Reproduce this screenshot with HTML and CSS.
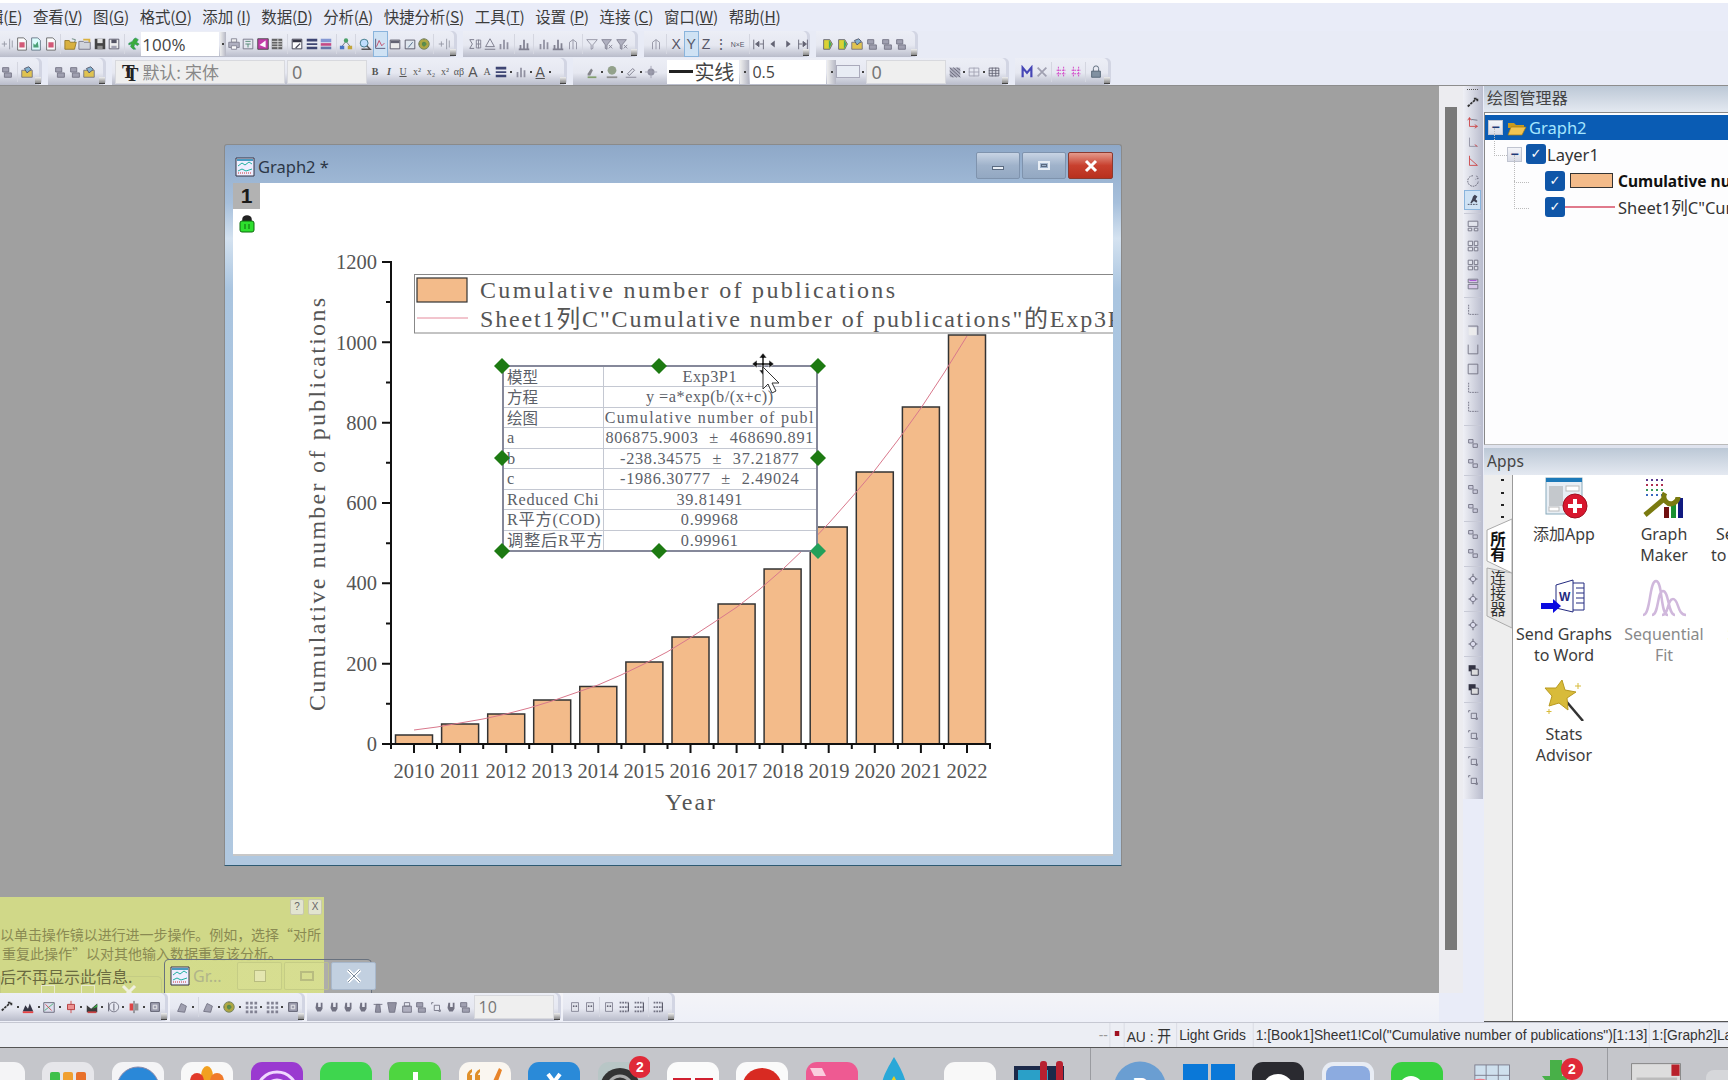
FILE: index.html
```html
<!DOCTYPE html>
<html lang="zh">
<head>
<meta charset="utf-8">
<title>Origin Graph2</title>
<link rel="stylesheet" href="styles.css">
</head>
<body>
<svg class="defs" width="0" height="0" aria-hidden="true">
<symbol id="doc" viewBox="0 0 16 16"><path d="M3 1h7l3 3v11H3z" fill="#fff" stroke="#555"/><path d="M5 6h6v6H5z" fill="#d04a6a"/></symbol>
<symbol id="docg" viewBox="0 0 16 16"><path d="M3 1h7l3 3v11H3z" fill="#dff" stroke="#567"/><path d="M5 7l2 2 3-4 1 7H5z" fill="#3a9a6a"/></symbol>
<symbol id="fold" viewBox="0 0 16 16"><path d="M1 4h5l1 2h7l-2 8H1z" fill="#d8ab2c" stroke="#8a6a10"/><path d="M9 2l4 1-1 3" fill="none" stroke="#576"/></symbol>
<symbol id="fold2" viewBox="0 0 16 16"><path d="M1 5h5l1 1h7v8H1z" fill="#cfd2da" stroke="#667"/><path d="M6 3h7v3" fill="none" stroke="#d8ab2c" stroke-width="2"/></symbol>
<symbol id="sav" viewBox="0 0 16 16"><path d="M2 2h12v12H2z" fill="#333"/><path d="M5 2h6v5H5z" fill="#ddd"/><path d="M5 10h6v4H5z" fill="#888"/></symbol>
<symbol id="sav2" viewBox="0 0 16 16"><path d="M2.500 2.500h11v11h-11z" fill="#eee" stroke="#445"/><path d="M5 3h6v4H5z" fill="#445"/><path d="M5 10h6v3H5z" fill="#99a"/></symbol>
<symbol id="run" viewBox="0 0 16 16"><path d="M10 1l3 2-2 3 3 2-2 2-3-2-1 3 2 3H7L4 11l1-3-3 1V7l4-2 2-3z" fill="#2aa52a" stroke="#176" stroke-width=".5"/></symbol>
<symbol id="prn" viewBox="0 0 16 16"><path d="M5 2h6v4H5z" fill="#eee" stroke="#778"/><path d="M2 6h12v6H2z" fill="#aab" stroke="#778"/><path d="M5 10h6v4H5z" fill="#fff" stroke="#778"/></symbol>
<symbol id="tbl" viewBox="0 0 16 16"><path d="M2.500 2.500h11v11h-11z" fill="#e6e8f0" stroke="#667"/><path d="M5 5h6M5 8h6M8 8v4" stroke="#3a7a60" fill="none"/></symbol>
<symbol id="mag" viewBox="0 0 16 16"><path d="M2 2h12v12H2z" fill="#c02aa0" stroke="#333"/><path d="M4 9l7-5v8z" fill="#fff"/></symbol>
<symbol id="col" viewBox="0 0 16 16"><path d="M2 2h12v12H2z" fill="#555"/><path d="M2 5h12M2 8h12M2 11h12M9 2v12" stroke="#ddd"/></symbol>
<symbol id="note" viewBox="0 0 16 16"><path d="M2.500 2.500h11v11h-11z" fill="#fff" stroke="#223"/><path d="M3 3h10v3H3z" fill="#223"/><path d="M6 12l5-5 1 1-5 5z" fill="#334"/></symbol>
<symbol id="lin" viewBox="0 0 16 16"><path d="M2 2h12v3H2zM2 7h12v2H2zM2 11h12v3H2z" fill="#2c3466"/></symbol>
<symbol id="stk" viewBox="0 0 16 16"><path d="M2 2h12v4H2z" fill="#7a8fd0"/><path d="M2 7h12v3H2z" fill="#c03a7a"/><path d="M2 11h12v3H2z" fill="#5a6aa0"/></symbol>
<symbol id="tre" viewBox="0 0 16 16"><path d="M8 5L3 11M8 5l5 6" stroke="#667" fill="none"/><circle cx="8" cy="4" r="2.500" fill="#3a9a5a"/><rect x="1" y="10" width="5" height="4" fill="#3a6ac0"/><rect x="10" y="10" width="5" height="4" fill="#c0a02a"/></symbol>
<symbol id="zm" viewBox="0 0 16 16"><circle cx="7" cy="7" r="4.500" fill="#bdf" stroke="#267"/><path d="M10 10l4 4H4" stroke="#444" stroke-width="1.500" fill="none"/></symbol>
<symbol id="hl" viewBox="0 0 16 16"><path d="M3 2v11h11" stroke="#446" fill="none"/><path d="M4 11l3-7 3 6 3-3" stroke="#c03050" fill="none"/></symbol>
<symbol id="win" viewBox="0 0 16 16"><path d="M2.500 3.500h11v10h-11z" fill="#eee" stroke="#445"/><path d="M3 4h10v3H3z" fill="#556"/></symbol>
<symbol id="wn2" viewBox="0 0 16 16"><path d="M2.500 3.500h11v10h-11z" fill="#dfe6ee" stroke="#445"/><path d="M6 12l5-6" stroke="#357"/></symbol>
<symbol id="gear" viewBox="0 0 16 16"><circle cx="8" cy="8" r="6" fill="#a8a030" stroke="#675"/><circle cx="8" cy="8" r="2.500" fill="#4a8a3a"/><path d="M8 2v12M2 8h12" stroke="#554" stroke-dasharray="1 3"/></symbol>
<symbol id="gp" viewBox="0 0 16 16"><path d="M2 8h6M5 5v6M11 2v12M14 4v8" stroke="#8a8e9a" fill="none"/></symbol>
<symbol id="sig" viewBox="0 0 16 16"><path d="M7 3H2l3 5-3 5h5" stroke="#667" fill="none"/><path d="M9.500 3.500h5v9h-5zM9.500 8h5M12 3v10" stroke="#778" fill="none"/></symbol>
<symbol id="iso" viewBox="0 0 16 16"><path d="M8 2L3 11h10zM2 14h12" stroke="#667" fill="none"/></symbol>
<symbol id="bar" viewBox="0 0 16 16"><path d="M3 8h2v6H3zM7 3h2v11H7zM11 6h2v8h-2z" fill="#889"/></symbol>
<symbol id="hb" viewBox="0 0 16 16"><path d="M2 14h12M4 9v4M8 3v10M12 7v6" stroke="#778" stroke-width="2" fill="none"/></symbol>
<symbol id="hk" viewBox="0 0 16 16"><path d="M4 14V6l4-3 4 3v8M8 3v11" stroke="#889" fill="none"/></symbol>
<symbol id="fun" viewBox="0 0 16 16"><path d="M2 3h12L9 9v4l-2 1V9z" fill="none" stroke="#889"/></symbol>
<symbol id="fx" viewBox="0 0 16 16"><path d="M2 3h11L8 9v5l-2-1V9z" fill="#aab" stroke="#778"/><path d="M10 9l4 4M14 9l-4 4" stroke="#778"/></symbol>
<symbol id="cyl" viewBox="0 0 16 16"><path d="M3 3h7l3 5-3 6H3z" fill="#d9d020" stroke="#556"/><path d="M9 3l3 5-3 6" fill="#2ca05a"/></symbol>
<symbol id="fil" viewBox="0 0 16 16"><path d="M2 6h12v8H2z" fill="#e0c040" stroke="#667"/><path d="M5 4l5-2 3 3-5 4z" fill="#7ac" stroke="#445"/></symbol>
<symbol id="gd" viewBox="0 0 16 16"><path d="M3 3h7v5H3zM5 9h8v5H5z" fill="#99a" stroke="#667"/></symbol>
<symbol id="ln1" viewBox="0 0 16 16"><path d="M3 2v11h11" stroke="#667" fill="none" stroke-dasharray="2 1"/></symbol>
<symbol id="ln2" viewBox="0 0 16 16"><path d="M2.500 3.500h11M13.500 3.500v10" stroke="#667" fill="none"/><path d="M3 5h9v9H3z" fill="#eee"/></symbol>
<symbol id="ln3" viewBox="0 0 16 16"><path d="M2.500 3v10.500h11V3" stroke="#667" fill="none"/></symbol>
<symbol id="ln4" viewBox="0 0 16 16"><path d="M2.500 2.500h11v11h-11z" stroke="#667" fill="none"/></symbol>
<symbol id="v1" viewBox="0 0 16 16"><path d="M2.500 2.500h11v6h-11zM2.500 10.500h4v3h-4zM9.500 10.500h4v3h-4z" fill="#e4e6ee" stroke="#667"/></symbol>
<symbol id="v2" viewBox="0 0 16 16"><path d="M2.500 2.500h5v5h-5zM9.500 2.500h4v5h-4zM2.500 9.500h5v4h-5zM9.500 9.500h4v4h-4z" fill="#e4e6ee" stroke="#667"/></symbol>
<symbol id="v3" viewBox="0 0 16 16"><path d="M2.500 2.500h11v4h-11zM2.500 8.500h11v5h-11z" fill="#d8c8e8" stroke="#667"/><path d="M4 4h8" stroke="#a03ad0"/></symbol>
<symbol id="a1" viewBox="0 0 16 16"><path d="M2 12L12 3M9 3h4v4" stroke="#222" stroke-width="2" fill="none" stroke-dasharray="3 1"/></symbol>
<symbol id="a2" viewBox="0 0 16 16"><path d="M4 3v10h9M4 3L2 6M4 3l2 3M13 13l-3-2M13 13l-3 2" stroke="#c33" fill="none"/><path d="M6 5l7 1" stroke="#667"/></symbol>
<symbol id="a3" viewBox="0 0 16 16"><path d="M4 3v10h9" stroke="#889" fill="none"/><path d="M13 13l-3-2" stroke="#c33"/></symbol>
<symbol id="a4" viewBox="0 0 16 16"><path d="M4 2v11h9L4 5" stroke="#c33" fill="none"/></symbol>
<symbol id="a5" viewBox="0 0 16 16"><path d="M8 2a6 6 0 1 0 6 6M12 2l2 3-3 1" stroke="#556" fill="none" stroke-dasharray="2 1"/></symbol>
<symbol id="a6" viewBox="0 0 16 16"><path d="M2 13h12" stroke="#334" stroke-dasharray="2 1"/><path d="M10 2l3 2-2 3 2 2-1 2-3-2-3 3-1-1 2-4 1-3z" fill="#334"/></symbol>
<symbol id="c1" viewBox="0 0 16 16"><path d="M8 2v12M3 8h10" stroke="#778" stroke-width="1.500"/><circle cx="8" cy="8" r="3" fill="#dde" stroke="#667"/></symbol>
<symbol id="c2" viewBox="0 0 16 16"><path d="M3 4h5v4H3zM8 9h5v4H8z" fill="#ccd" stroke="#667"/></symbol>
<symbol id="c3" viewBox="0 0 16 16"><path d="M3 2.500h8v7H3z" fill="#223"/><path d="M6 7h8v7H6z" fill="#ddd" stroke="#223"/></symbol>
<symbol id="c4" viewBox="0 0 16 16"><path d="M6 6h6v6H6z" fill="none" stroke="#667"/><path d="M3 3h2M3 3v2M13 13h-2M13 13v-2" stroke="#667"/></symbol>
<symbol id="b1" viewBox="0 0 16 16"><path d="M2 13l3-7 3 4 2-6 4 9z" fill="#223"/><path d="M2 14h12" stroke="#e33" stroke-width="2"/></symbol>
<symbol id="b2" viewBox="0 0 16 16"><path d="M2 3h12v11H2z" fill="#dde" stroke="#556"/><path d="M3 12L13 4" stroke="#3a6"/><path d="M4 5l7 7" stroke="#c33"/></symbol>
<symbol id="b3" viewBox="0 0 16 16"><path d="M8 1v14" stroke="#c33"/><path d="M4 5h8v6H4z" fill="#e88" stroke="#a22"/></symbol>
<symbol id="b4" viewBox="0 0 16 16"><path d="M2 6l5 4 7-6v10H2z" fill="#2a2a2a"/><path d="M8 10l6-5v3z" fill="#2a3"/><path d="M3 14h10" stroke="#c33" stroke-width="2"/></symbol>
<symbol id="b5" viewBox="0 0 16 16"><circle cx="9" cy="8" r="5.500" fill="none" stroke="#667"/><path d="M3 3v10M9 4v8" stroke="#445"/></symbol>
<symbol id="b6" viewBox="0 0 16 16"><path d="M8 1v14" stroke="#333"/><path d="M3 4h4v8H3z" fill="#d33"/><path d="M9 4h4v8H9z" fill="#888"/></symbol>
<symbol id="b7" viewBox="0 0 16 16"><path d="M3 3h10v10H3z" fill="#99a" stroke="#445"/><path d="M6 6h4v4H6z" fill="none" stroke="#eee"/></symbol>
<symbol id="b8" viewBox="0 0 16 16"><path d="M3 13l4-9 6 3-2 7z" fill="#99a" stroke="#667"/></symbol>
<symbol id="b9" viewBox="0 0 16 16"><path d="M2 2h3v3H2zM7 2h3v3H7zM12 2h3v3h-3zM2 7h3v3H2zM7 7h3v3H7zM12 7h3v3h-3zM2 12h3v3H2zM7 12h3v3H7zM12 12h3v3h-3z" fill="#778"/></symbol>
<symbol id="t1" viewBox="0 0 16 16"><path d="M5 3h2v5h3V3h2v7l-2 3H6L4 9z" fill="#667"/></symbol>
<symbol id="t2" viewBox="0 0 16 16"><path d="M5 14l1-9h4l1 9zM3 5h10" fill="#889" stroke="#667"/></symbol>
<symbol id="t3" viewBox="0 0 16 16"><path d="M3 3h10l-2 11H5z" fill="#889" stroke="#667"/></symbol>
<symbol id="t4" viewBox="0 0 16 16"><path d="M3 7h10v7H3z" fill="#aab" stroke="#667"/><path d="M5 3h6v4H5z" fill="none" stroke="#667"/></symbol>
<symbol id="m1" viewBox="0 0 16 16"><path d="M4 3h8v10H4z" fill="#e2e4ec" stroke="#778"/><circle cx="6.500" cy="7" r="1" fill="#556"/><circle cx="9.500" cy="7" r="1" fill="#556"/></symbol>
<symbol id="m2" viewBox="0 0 16 16"><path d="M3 3h10M3 8h10M3 13h10" stroke="#667" stroke-dasharray="2 1" stroke-width="2"/><path d="M13 3v10" stroke="#223"/></symbol>
<symbol id="n1" viewBox="0 0 16 16"><path d="M2 3v11M13 3v11" stroke="#556"/><path d="M8 5l-4 3 4 3zM13 8h-4" fill="#556" stroke="#556"/></symbol>
<symbol id="n2" viewBox="0 0 16 16"><path d="M10 4l-5 4 5 4z" fill="#556"/></symbol>
<symbol id="n3" viewBox="0 0 16 16"><path d="M6 4l5 4-5 4z" fill="#556"/></symbol>
<symbol id="n4" viewBox="0 0 16 16"><path d="M3 3v11M13 3v11" stroke="#556"/><path d="M8 5l4 3-4 3zM3 8h4" fill="#556" stroke="#556"/></symbol>
<symbol id="k1" viewBox="0 0 16 16"><path d="M3 10l4-6 2 2-3 6H3z" fill="#7a7a80"/><path d="M3 14h10" stroke="#7a9a60" stroke-width="2"/></symbol>
<symbol id="k2" viewBox="0 0 16 16"><circle cx="8" cy="6" r="5" fill="#8a9a80"/><path d="M2 14h12" stroke="#888" stroke-width="2"/></symbol>
<symbol id="k3" viewBox="0 0 16 16"><path d="M4 10l6-6 2 2-6 6z" fill="none" stroke="#667"/><path d="M2 14h12" stroke="#778"/></symbol>
<symbol id="k4" viewBox="0 0 16 16"><circle cx="8" cy="8" r="4" fill="#889"/><path d="M8 1v14M1 8h14" stroke="#99a"/></symbol>
<symbol id="k5" viewBox="0 0 16 16"><path d="M2 3h12v11H2z" fill="#aab"/><path d="M2 3l12 11M6 3l8 7M2 7l8 7M10 3l4 3M2 11l4 3" stroke="#556"/></symbol>
<symbol id="k6" viewBox="0 0 16 16"><path d="M2.500 3.500h11v9h-11zM8 3v10M2 8h12" fill="none" stroke="#99a"/></symbol>
<symbol id="k7" viewBox="0 0 16 16"><path d="M2.500 3.500h11v9h-11zM2 6.500h12M2 9.500h12M6 3v10M10 3v10" fill="none" stroke="#556"/></symbol>
<symbol id="z1" viewBox="0 0 16 16"><path d="M3 14V3l5 6 5-6v11" fill="none" stroke="#3535b0" stroke-width="2.500"/></symbol>
<symbol id="z2" viewBox="0 0 16 16"><path d="M3 3l10 10M13 3L3 13" stroke="#99a" stroke-width="2"/></symbol>
<symbol id="z3" viewBox="0 0 16 16"><path d="M5 2v12M11 2v12M3 6h10M3 10h10" stroke="#d020c0" stroke-dasharray="2 1"/></symbol>
<symbol id="z4" viewBox="0 0 16 16"><path d="M3 7h10v7H3z" fill="#789" stroke="#456"/><path d="M5 7V4a3 3 0 0 1 6 0v3" fill="none" stroke="#456"/></symbol>
<symbol id="mini" viewBox="0 0 20 20"><path d="M1 1h18v18H1z" fill="#eef" stroke="#334"/><path d="M2 2h16v2H2z" fill="#4a9ac0"/><path d="M3 9l4-3 3 2 4-3 3 2M3 14l4-2 4 2 6-2" fill="none" stroke="#20b0a0"/><path d="M3 16h14" stroke="#c33" stroke-dasharray="1 1"/></symbol>
</svg>

<div class="topstrip"></div>
<nav class="menubar">
  <span class="mi first">辑(<u>E</u>)</span><span class="mi">查看(<u>V</u>)</span><span class="mi">图(<u>G</u>)</span><span class="mi">格式(<u>O</u>)</span><span class="mi">添加 (<u>I</u>)</span><span class="mi">数据(<u>D</u>)</span><span class="mi">分析(<u>A</u>)</span><span class="mi">快捷分析(<u>S</u>)</span><span class="mi">工具(<u>T</u>)</span><span class="mi">设置 (<u>P</u>)</span><span class="mi">连接 (<u>C</u>)</span><span class="mi">窗口(<u>W</u>)</span><span class="mi">帮助(<u>H</u>)</span>
</nav>

<div class="tbrow row1">
  <div class="seg w455">
    <svg class="ic"><use href="#gp"/></svg><svg class="ic"><use href="#doc"/></svg><svg class="ic"><use href="#docg"/></svg><svg class="ic"><use href="#doc"/></svg><i class="s"></i>
    <svg class="ic"><use href="#fold"/></svg><svg class="ic"><use href="#fold2"/></svg><svg class="ic"><use href="#sav"/></svg><svg class="ic"><use href="#sav2"/></svg><i class="s"></i>
    <svg class="ic"><use href="#run"/></svg>
    <div class="combo c78 big">100%</div><span class="drop thin"></span>
    <svg class="ic"><use href="#prn"/></svg><svg class="ic"><use href="#tbl"/></svg><svg class="ic"><use href="#mag"/></svg><svg class="ic"><use href="#col"/></svg><i class="s"></i>
    <svg class="ic"><use href="#note"/></svg><svg class="ic"><use href="#lin"/></svg><svg class="ic"><use href="#stk"/></svg><i class="s"></i>
    <svg class="ic"><use href="#tre"/></svg><i class="s"></i>
    <svg class="ic"><use href="#zm"/></svg><span class="hi"><svg class="ic"><use href="#hl"/></svg></span><svg class="ic"><use href="#win"/></svg><svg class="ic"><use href="#wn2"/></svg><svg class="ic"><use href="#gear"/></svg><i class="s"></i><svg class="ic"><use href="#gp"/></svg>
    <b class="grip"></b>
  </div>
  <div class="seg w174 pl">
    <svg class="ic"><use href="#sig"/></svg><svg class="ic"><use href="#iso"/></svg><svg class="ic"><use href="#bar"/></svg><i class="s"></i><svg class="ic"><use href="#hb"/></svg><i class="s"></i><svg class="ic"><use href="#bar"/></svg><svg class="ic"><use href="#hb"/></svg><svg class="ic"><use href="#hk"/></svg><i class="s"></i><svg class="ic"><use href="#fun"/></svg><svg class="ic"><use href="#fx"/></svg><svg class="ic"><use href="#fx"/></svg>
    <b class="grip"></b>
  </div>
  <div class="seg w166 pl">
    <svg class="ic"><use href="#hk"/></svg><i class="s"></i><span class="lt">X</span><span class="hi lt">Y</span><span class="lt">Z</span><span class="lt">⋮</span><span class="lt tiny">N×E</span><i class="s"></i>
    <svg class="ic"><use href="#n1"/></svg><svg class="ic"><use href="#n2"/></svg><svg class="ic"><use href="#n3"/></svg><svg class="ic"><use href="#n4"/></svg>
    <b class="grip"></b>
  </div>
  <div class="seg w102 pl">
    <svg class="ic"><use href="#cyl"/></svg><svg class="ic"><use href="#cyl"/></svg><svg class="ic"><use href="#fil"/></svg><svg class="ic"><use href="#gd"/></svg><svg class="ic"><use href="#gd"/></svg><svg class="ic"><use href="#gd"/></svg>
    <b class="grip"></b>
  </div>
</div>

<div class="tbrow row2">
  <div class="seg w42">
    <svg class="ic"><use href="#gd"/></svg><i class="s"></i><svg class="ic"><use href="#fil"/></svg>
    <b class="grip"></b>
  </div>
  <div class="seg w55 pl">
    <svg class="ic"><use href="#gd"/></svg><svg class="ic"><use href="#gd"/></svg><svg class="ic"><use href="#fil"/></svg>
    <b class="grip"></b>
  </div>
  <div class="seg w466 fmt">
    <div class="combo c170 dim"><span class="tt">T<em>T</em></span>默认: 宋体</div>
    <div class="combo c80 dim">0</div>
    <span class="fx b">B</span><span class="fx it">I</span><span class="fx un">U</span><span class="fx">x²</span><span class="fx">x₂</span><span class="fx">x²</span><span class="fx">αβ</span><span class="fx lg">A</span><span class="fx">A</span><svg class="ic"><use href="#lin"/></svg><span class="dot"></span><svg class="ic"><use href="#bar"/></svg><span class="dot"></span><span class="fx lg un">A</span><span class="dot"></span>
    <b class="grip"></b>
  </div>
  <div class="seg w436 pl2">
    <svg class="ic"><use href="#k1"/></svg><span class="dot"></span><svg class="ic"><use href="#k2"/></svg><span class="dot"></span><svg class="ic"><use href="#k3"/></svg><span class="dot"></span><svg class="ic"><use href="#k4"/></svg>
    <div class="combo c72 solid"><i class="thick"></i>实线</div><span class="drop"></span>
    <div class="combo c76 num">0.5</div><span class="drop"></span>
    <span class="linebox"></span><span class="dot"></span>
    <div class="combo c80 dim">0</div>
    <svg class="ic"><use href="#k5"/></svg><span class="dot"></span><svg class="ic"><use href="#k6"/></svg><span class="dot"></span><svg class="ic"><use href="#k7"/></svg>
    <b class="grip"></b>
  </div>
  <div class="seg w96 pl">
    <svg class="ic"><use href="#z1"/></svg><svg class="ic"><use href="#z2"/></svg><i class="s"></i><svg class="ic"><use href="#z3"/></svg><svg class="ic"><use href="#z3"/></svg><i class="s"></i><svg class="ic"><use href="#z4"/></svg>
    <b class="grip"></b>
  </div>
</div>

<div class="main">
  <div class="leftcol">
    <section class="workspace">
      <article class="gwin">
        <header class="gtitle">
          <svg class="gicon"><use href="#mini"/></svg>
          <span class="gname">Graph2 *</span>
          <span class="wbtn"><i class="wmin"></i></span>
          <span class="wbtn"><i class="wres"></i></span>
          <span class="wbtn wclose"><svg width="16" height="14" viewBox="0 0 16 14"><path d="M3 2l10 10M13 2L3 12" stroke="#fff" stroke-width="3"/></svg></span>
        </header>
        <div class="client">
          <svg class="chart" viewBox="233 183 880 672" width="880" height="672">
            <g class="bars">
              <rect x="395.500" y="735" width="37" height="9"/>
              <rect x="441.600" y="724" width="37" height="20"/>
              <rect x="487.700" y="714" width="37" height="30"/>
              <rect x="533.700" y="700" width="37" height="44"/>
              <rect x="579.800" y="686.500" width="37" height="57.500"/>
              <rect x="625.900" y="662" width="37" height="82"/>
              <rect x="672" y="637" width="37" height="107"/>
              <rect x="718.100" y="604" width="37" height="140"/>
              <rect x="764.100" y="569" width="37" height="175"/>
              <rect x="810.200" y="527" width="37" height="217"/>
              <rect x="856.300" y="472" width="37" height="272"/>
              <rect x="902.400" y="407" width="37" height="337"/>
              <rect x="948.500" y="335" width="37" height="409"/>
            </g>
            <polyline class="fit" points="414,730 437,727 460,723 483,719 506,714 529,708 552,701 575,693 598,685 621,675 644,664 667,652 690,638 713,623 737,607 760,589 783,569 806,547 829,523 852,497 875,470 898,440 921,408 944,373 967,336"/>
            <path class="axis" d="M391 261V745M382 262H391M386 302H391M382 342.300H391M386 382.500H391M382 422.700H391M386 462.800H391M382 503H391M386 543.200H391M382 583.300H391M386 623.500H391M382 663.700H391M386 703.800H391M382 744H991"/>
            <path class="axis" d="M414 744v9M460.100 744v9M506.200 744v9M552.200 744v9M598.300 744v9M644.400 744v9M690.500 744v9M736.600 744v9M782.600 744v9M828.700 744v9M874.800 744v9M920.900 744v9M967 744v9M391 744v5M437 744v5M483.200 744v5M529.200 744v5M575.300 744v5M621.400 744v5M667.500 744v5M713.600 744v5M759.600 744v5M805.700 744v5M851.800 744v5M897.900 744v5M944 744v5M990 744v5"/>
            <g class="ylab">
              <text x="377" y="269">1200</text><text x="377" y="350">1000</text><text x="377" y="430">800</text><text x="377" y="510">600</text><text x="377" y="590">400</text><text x="377" y="671">200</text><text x="377" y="751">0</text>
            </g>
            <g class="xlab">
              <text x="414" y="778">2010</text><text x="460" y="778">2011</text><text x="506" y="778">2012</text><text x="552" y="778">2013</text><text x="598" y="778">2014</text><text x="644" y="778">2015</text><text x="690" y="778">2016</text><text x="737" y="778">2017</text><text x="783" y="778">2018</text><text x="829" y="778">2019</text><text x="875" y="778">2020</text><text x="921" y="778">2021</text><text x="967" y="778">2022</text>
            </g>
            <text class="ttl" x="665" y="810" textLength="50" lengthAdjust="spacing">Year</text>
            <text class="ttl" transform="translate(325 711) rotate(-90)" textLength="413" lengthAdjust="spacing">Cumulative number of publications</text>
            <rect class="lgbox" x="414.500" y="274.500" width="720" height="58.500"/>
            <rect class="lgswatch" x="417" y="278" width="50" height="24"/>
            <line class="lgline" x1="417" y1="318" x2="468" y2="318"/>
            <text class="ttl" x="480" y="298" textLength="415" lengthAdjust="spacing">Cumulative number of publications</text>
            <text class="ttl" x="480" y="327" textLength="655" lengthAdjust="spacing">Sheet1列C"Cumulative number of publications"的Exp3P1</text>
          </svg>
          <span class="layertab">1</span>
          <svg class="lock" width="16" height="18" viewBox="0 0 16 18"><path d="M4 7V4a4 3 0 0 1 8 0v3" fill="#222" stroke="#222" stroke-width="1.500"/><rect x="1" y="6" width="14" height="11" rx="2" fill="#2ee02e" stroke="#0a6a0a"/><path d="M6 9v5M10 9v5" stroke="#0a6a0a"/></svg>
          <table class="fit-table">
            <tr><th>模型</th><td>Exp3P1</td></tr>
            <tr><th>方程</th><td>y =a*exp(b/(x+c))</td></tr>
            <tr><th>绘图</th><td class="spaced">Cumulative number of publ</td></tr>
            <tr><th class="lat">a</th><td class="val">806875.9003 ± 468690.891</td></tr>
            <tr><th class="lat">b</th><td class="val">-238.34575 ± 37.21877</td></tr>
            <tr><th class="lat">c</th><td class="val">-1986.30777 ± 2.49024</td></tr>
            <tr><th class="lat">Reduced Chi</th><td class="val">39.81491</td></tr>
            <tr><th class="lat">R平方(COD)</th><td class="val">0.99968</td></tr>
            <tr><th class="lat">调整后R平方</th><td class="val">0.99961</td></tr>
          </table>
          <svg class="handles" viewBox="233 183 880 672" width="880" height="672">
            <g fill="#1d7a12">
              <path d="M502 358l8 8-8 8-8-8zM659 358l8 8-8 8-8-8zM818 358l8 8-8 8-8-8zM502 450l8 8-8 8-8-8zM818 450l8 8-8 8-8-8zM502 543l8 8-8 8-8-8zM659 543l8 8-8 8-8-8z"/>
              <path d="M818 543l8 8-8 8-8-8z" fill="#22a05a"/>
            </g>
            <path d="M763 353l4 5h-3v5h5v-3l5 4-5 4v-3h-5v5h3l-4 5-4-5h3v-5h-5v3l-5-4 5-4v3h5v-5h-3z" fill="#111" stroke="#fff" stroke-width=".6"/>
            <path d="M763 367v22l5-5 4 9 4-2-4-8h7z" fill="#fff" stroke="#333"/>
          </svg>
        </div>
      </article>

      <aside class="tip">
        <div class="tipbtns"><span class="tb">?</span><span class="tb">X</span></div>
        <p class="l1">以单击操作镜以进行进一步操作。例如，选择“对所</p>
        <p class="l2">重复此操作”以对其他输入数据重复该分析。</p>
        <p class="l3">后不再显示此信息.</p>
      </aside>
      <div class="ghost"><i class="gb"></i><i class="gb"></i><svg width="16" height="14" viewBox="0 0 16 14"><path d="M2 1l12 12M14 1L2 13" stroke="#f0f0e0" stroke-width="3"/></svg></div>
      <div class="preview">
        <svg class="pic"><use href="#mini"/></svg>
        <span class="pname">Gr...</span>
        <span class="pbtn"><i class="pres"></i></span>
        <span class="pbtn"><i class="pmax"></i></span>
        <span class="pbtn pclose"><svg width="16" height="14" viewBox="0 0 16 14"><path d="M2 1l12 12M14 1L2 13" stroke="#fff" stroke-width="3.500"/><path d="M2 1l12 12M14 1L2 13" stroke="#7a8a9a" stroke-width="1"/></svg></span>
      </div>
    </section>
    <div class="tbrow bottomtb">
      <div class="seg w168">
        <svg class="ic"><use href="#a1"/></svg><span class="dot"></span><svg class="ic"><use href="#b1"/></svg><span class="dot"></span><svg class="ic"><use href="#b2"/></svg><span class="dot"></span><svg class="ic"><use href="#b3"/></svg><span class="dot"></span><svg class="ic"><use href="#b4"/></svg><span class="dot"></span><svg class="ic"><use href="#b5"/></svg><span class="dot"></span><svg class="ic"><use href="#b6"/></svg><span class="dot"></span><svg class="ic"><use href="#b7"/></svg>
        <b class="grip"></b>
      </div>
      <div class="seg w135 pl">
        <svg class="ic"><use href="#b8"/></svg><span class="dot"></span><i class="s"></i><svg class="ic"><use href="#b8"/></svg><span class="dot"></span><svg class="ic"><use href="#gear"/></svg><span class="dot"></span><svg class="ic"><use href="#b9"/></svg><span class="dot"></span><svg class="ic"><use href="#b9"/></svg><span class="dot"></span><svg class="ic"><use href="#b7"/></svg>
        <b class="grip"></b>
      </div>
      <div class="seg w254 pl">
        <svg class="ic"><use href="#t1"/></svg><svg class="ic"><use href="#t1"/></svg><svg class="ic"><use href="#t1"/></svg><svg class="ic"><use href="#t1"/></svg><svg class="ic"><use href="#t2"/></svg><svg class="ic"><use href="#t3"/></svg><svg class="ic"><use href="#t4"/></svg><svg class="ic"><use href="#gd"/></svg><svg class="ic"><use href="#c4"/></svg><svg class="ic"><use href="#t1"/></svg><svg class="ic"><use href="#gd"/></svg>
        <div class="combo c80 dim ten">10</div>
        <b class="grip"></b>
      </div>
      <div class="seg w112 pl">
        <svg class="ic"><use href="#m1"/></svg><svg class="ic"><use href="#m1"/></svg><i class="s"></i><svg class="ic"><use href="#m1"/></svg><svg class="ic"><use href="#m2"/></svg><svg class="ic"><use href="#m2"/></svg><i class="s"></i><svg class="ic"><use href="#m2"/></svg>
        <b class="grip"></b>
      </div>
    </div>
  </div>

  <div class="track"><div class="thumb"></div></div>

  <div class="vbar">
    <span class="vgrip"></span>
    <svg class="ic"><use href="#a1"/></svg><svg class="ic"><use href="#a2"/></svg><svg class="ic"><use href="#a3"/></svg><svg class="ic"><use href="#a4"/></svg><svg class="ic"><use href="#a5"/></svg><span class="hi"><svg class="ic"><use href="#a6"/></svg></span><i class="hs"></i>
    <svg class="ic"><use href="#v1"/></svg><svg class="ic"><use href="#v2"/></svg><svg class="ic"><use href="#v2"/></svg><svg class="ic"><use href="#v3"/></svg><i class="hs"></i>
    <svg class="ic"><use href="#ln1"/></svg><svg class="ic"><use href="#ln2"/></svg><svg class="ic"><use href="#ln3"/></svg><svg class="ic"><use href="#ln4"/></svg><svg class="ic"><use href="#ln1"/></svg><svg class="ic"><use href="#ln1"/></svg><i class="hs wide"></i>
    <svg class="ic"><use href="#c2"/></svg><svg class="ic"><use href="#c2"/></svg><i class="hs"></i>
    <svg class="ic"><use href="#c2"/></svg><svg class="ic"><use href="#c2"/></svg><i class="hs"></i>
    <svg class="ic"><use href="#c2"/></svg><svg class="ic"><use href="#c2"/></svg><i class="hs"></i>
    <svg class="ic"><use href="#c1"/></svg><svg class="ic"><use href="#c1"/></svg><i class="hs"></i>
    <svg class="ic"><use href="#c1"/></svg><svg class="ic"><use href="#c1"/></svg><i class="hs"></i>
    <svg class="ic"><use href="#c3"/></svg><svg class="ic"><use href="#c3"/></svg><i class="hs"></i>
    <svg class="ic"><use href="#c4"/></svg><svg class="ic"><use href="#c4"/></svg><i class="hs"></i>
    <svg class="ic"><use href="#c4"/></svg><svg class="ic"><use href="#c4"/></svg>
  </div>

  <div class="panel">
    <h2 class="ptitle">绘图管理器</h2>
    <div class="tree">
      <div class="trow sel"><span class="exp">−</span><svg class="tfold" width="20" height="16" viewBox="0 0 20 16"><path d="M1 3h6l2 2h8v3H1z" fill="#c89a20"/><path d="M1 15L4 7h15l-4 8z" fill="#f0c452" stroke="#a87a10" stroke-width=".7"/></svg><span>Graph2</span></div>
      <div class="trow in1 con"><span class="exp">−</span><span class="chk">✓</span><span>Layer1</span></div>
      <div class="trow in2 con"><span class="chk">✓</span><i class="tsw"></i><b class="bold">Cumulative number of publications</b></div>
      <div class="trow in2 con"><span class="chk">✓</span><i class="tline"></i><span class="nw">Sheet1列C"Cumulative number of publications"</span></div>
    </div>
    <h2 class="ptitle apps">Apps</h2>
    <div class="appbody">
      <svg class="tabs" width="28" height="546" viewBox="1484 476 28 546">
        <rect x="1484" y="476" width="28" height="546" fill="#eeeeee"/>
        <path d="M1501 481h3M1501 494h3M1501 506h3M1501 518h3" stroke="#222" stroke-width="2"/>
        <path d="M1512 629l-25-12v-48l25 5z" fill="#e6e6e6" stroke="#aaa"/>
        <path d="M1512 520l-25 11v31l25 12z" fill="#fff" stroke="#aaa"/>
        <text class="vtab vb" x="1498" y="532">所有</text>
        <text class="vtab" x="1498" y="571">连接器</text>
      </svg>
      <div class="appgrid">
        <div class="app">
          <svg width="48" height="44" viewBox="0 0 48 44"><rect x="6" y="1" width="36" height="36" fill="#e8eef4" stroke="#8ab"/><rect x="6" y="1" width="36" height="4" fill="#1c79b8"/><rect x="9" y="9" width="14" height="20" fill="#c4c8cc"/><rect x="26" y="9" width="13" height="5" fill="#fff" stroke="#bbb"/><rect x="9" y="30" width="10" height="4" fill="#fff" stroke="#bbb"/><circle cx="35" cy="29" r="12" fill="#d8172e" stroke="#a01020"/><path d="M35 22v14M28 29h14" stroke="#fff" stroke-width="4"/></svg>
          <span>添加App</span>
        </div>
        <div class="app">
          <svg width="48" height="44" viewBox="0 0 48 44"><path d="M6 2h2v2H6zM11 2h2v2h-2zM16 2h2v2h-2zM21 2h2v2h-2z" fill="#5a3a90"/><path d="M6 7h2v2H6zM11 7h2v2h-2zM16 7h2v2h-2zM21 7h2v2h-2z" fill="#b03050"/><path d="M6 12h2v2H6zM11 12h2v2h-2zM16 12h2v2h-2zM21 12h2v2h-2z" fill="#3a9a5a"/><path d="M6 17h2v2H6zM11 17h2v2h-2zM16 17h2v2h-2zM21 17h2v2h-2z" fill="#3a6ac0"/><rect x="24" y="30" width="5" height="11" fill="#701010"/><rect x="31" y="26" width="5" height="15" fill="#1a9030"/><rect x="38" y="21" width="5" height="20" fill="#101a80"/><path d="M5 38L24 22M25 16a7 7 0 0 0 9 10 7 7 0 0 0 4-6" stroke="#7a7a10" stroke-width="5" fill="none"/></svg>
          <span>Graph<br>Maker</span>
        </div>
        <div class="app third"><span class="lbl">Send Graphs<br>to PowerPoint</span></div>
        <div class="app">
          <svg width="48" height="44" viewBox="0 0 48 44"><path d="M16 8l17-5v32l-17-4z" fill="#fff" stroke="#232a80"/><path d="M33 6h11v27H33M36 11h8M36 16h8M36 21h8M36 26h8" fill="none" stroke="#232a80"/><text x="19" y="24" font-size="12" font-weight="700" font-family="Liberation Sans" fill="#232a80">W</text><path d="M1 26h12v-4l8 7-8 7v-4H1z" fill="#0a0ae0"/></svg>
          <span>Send Graphs<br>to Word</span>
        </div>
        <div class="app faded">
          <svg width="48" height="44" viewBox="0 0 48 44"><path d="M3 38c8 0 6-34 13-34s4 34 12 34M12 38c7 0 5-24 11-24s5 24 12 24M22 38c7 0 5-16 11-16s4 16 13 16" fill="none" stroke="#d0b8dc" stroke-width="2.500"/></svg>
          <span>Sequential<br>Fit</span>
        </div>
        <div class="app third"><span class="lbl">Simple Fit</span></div>
        <div class="app">
          <svg width="48" height="44" viewBox="0 -2 48 44"><path d="M26 22l17 20" stroke="#333" stroke-width="2.500"/><path d="M22 1l3 10 11 2-9 6 1 12-9-7-10 3 3-10-7-8 11 0z" fill="#d8bb3a" stroke="#b89a20"/><path d="M38 4v6M35 7h6M9 30v5M6.500 32.500h5" stroke="#d8bb3a"/></svg>
          <span>Stats<br>Advisor</span>
        </div>
      </div>
    </div>
  </div>
</div>

<footer class="status">
  <div class="scells">
    <span class="cell dimc">--</span><span class="cell red"><i></i></span><span class="cell au">AU : 开</span><span class="cell lg">Light Grids</span><span class="cell">1:[Book1]Sheet1!Col("Cumulative number of publications")[1:13]</span><span class="cell">1:[Graph2]Layer1</span>
  </div>
</footer>

<div class="dock">
  <svg class="d dfirst" viewBox="0 0 52 60"><rect y="8" width="52" height="52" rx="11" fill="#f4f4f6"/><path d="M42 40v8" stroke="#445" stroke-width="2"/></svg>
  <svg class="d" viewBox="0 0 52 60"><rect y="8" width="52" height="52" rx="11" fill="#e6e6ea"/><rect x="8" y="18" width="10" height="10" rx="2" fill="#3ec04a"/><rect x="21" y="18" width="10" height="10" rx="2" fill="#f0a030"/><rect x="34" y="18" width="10" height="10" rx="2" fill="#e8702a"/></svg>
  <svg class="d" viewBox="0 0 52 60"><rect y="8" width="52" height="52" rx="11" fill="#f4f4f6"/><circle cx="26" cy="34" r="21" fill="#2a88d8" stroke="#88a"/></svg>
  <svg class="d" viewBox="0 0 52 60"><rect y="8" width="52" height="52" rx="11" fill="#f8f8f8"/><ellipse cx="26" cy="22" rx="6" ry="10" fill="#f2a020"/><ellipse cx="16" cy="27" rx="7" ry="8" fill="#e23a2a"/><ellipse cx="36" cy="27" rx="7" ry="8" fill="#f07a2a"/></svg>
  <svg class="d" viewBox="0 0 52 60"><rect y="8" width="52" height="52" rx="11" fill="#9a3ad0"/><circle cx="26" cy="38" r="20" fill="none" stroke="#f0d8ff" stroke-width="3"/><circle cx="26" cy="38" r="12" fill="none" stroke="#f0d8ff" stroke-width="3"/></svg>
  <svg class="d" viewBox="0 0 52 60"><rect y="8" width="52" height="52" rx="11" fill="#3ed64e"/><rect x="10" y="26" width="22" height="20" rx="4" fill="#fff"/></svg>
  <svg class="d" viewBox="0 0 52 60"><rect y="8" width="52" height="52" rx="11" fill="#4ed640"/><rect x="24" y="18" width="5" height="30" fill="#fff"/></svg>
  <svg class="d" viewBox="0 0 52 60"><rect y="8" width="52" height="52" rx="11" fill="#faf6f0"/><path d="M8 22c0-4 3-6 5-7v3c-1 1-2 2-2 3h2v6H8zM16 22c0-4 3-6 5-7v3c-1 1-2 2-2 3h2v6h-5z" fill="#e0902a"/><path d="M30 36l10-22 3 2-8 22z" fill="#e8842a"/></svg>
  <svg class="d" viewBox="0 0 52 60"><rect y="8" width="52" height="52" rx="11" fill="#2a8ad8"/><path d="M20 20l6 8 6-8" stroke="#fff" stroke-width="4" fill="none"/></svg>
  <svg class="d" viewBox="0 0 52 60"><rect y="8" width="52" height="52" rx="11" fill="#b8c6c6"/><circle cx="22" cy="34" r="20" fill="#333"/><circle cx="22" cy="34" r="12" fill="none" stroke="#aaa" stroke-width="3"/><circle cx="42" cy="13" r="11" fill="#e02a38"/><text x="42" y="18" class="badge">2</text></svg>
  <svg class="d" viewBox="0 0 52 60"><rect y="8" width="52" height="52" rx="11" fill="#fbfbfb"/><path d="M6 24h18v20H6zM28 24h18v20H28z" fill="#d02030"/></svg>
  <svg class="d" viewBox="0 0 52 60"><rect y="8" width="52" height="52" rx="11" fill="#fafafa"/><circle cx="26" cy="34" r="20" fill="#d82a22"/><path d="M26 34h20a20 20 0 0 1-5 13z" fill="#f0b020"/><circle cx="26" cy="36" r="9" fill="#fff"/></svg>
  <svg class="d" viewBox="0 0 52 60"><rect y="8" width="52" height="52" rx="11" fill="#ee5a92"/><path d="M4 14h12l4 8H8z" fill="#fff" opacity=".7"/></svg>
  <svg class="d" viewBox="0 0 52 60"><path d="M19 3c-8 14-13 22-13 36h26C32 25 26 15 19 3z" fill="#2aa8d8"/><path d="M19 22c-5 8-7 12-7 20h14c0-8-3-12-7-20z" fill="#e8d020"/><path d="M19 32c-3 5-4 8-4 12h8c0-4-1-7-4-12z" fill="#d01010"/></svg>
  <svg class="d" viewBox="0 0 52 60"><rect y="8" width="52" height="52" rx="11" fill="#f8f8f8"/><path d="M15 26h22v22H15z" fill="#2a84d8"/><path d="M6 42h22v12H6z" fill="#0a5ab0"/></svg>
  <svg class="d" viewBox="0 0 52 60"><rect x="0" y="12" width="50" height="48" fill="#1c2a4a"/><rect x="4" y="16" width="30" height="44" fill="#2aa0c8"/><rect x="26" y="7" width="7" height="53" rx="3" fill="#b82030"/><rect x="42" y="7" width="7" height="53" rx="3" fill="#b82030"/></svg>
  <i class="dsep"></i>
  <svg class="d" viewBox="0 0 60 60"><circle cx="30" cy="34" r="30" fill="#6a9ed2"/><text x="30" y="40" class="pb">P</text></svg>
  <svg class="d" viewBox="0 0 52 60"><path d="M0 10h25v50H0zM28 10h24v50H28z" fill="#0a78d8"/></svg>
  <svg class="d" viewBox="0 0 52 60"><rect y="8" width="52" height="52" rx="11" fill="#2a2a30"/><circle cx="26" cy="36" r="16" fill="#fff"/><circle cx="26" cy="38" r="9" fill="#1a66c8"/></svg>
  <svg class="d" viewBox="0 0 52 60"><rect y="8" width="52" height="52" rx="11" fill="#e8ecf4"/><rect x="4" y="12" width="44" height="44" rx="8" fill="#8cabe0"/></svg>
  <svg class="d" viewBox="0 0 52 60"><rect y="8" width="52" height="52" rx="11" fill="#38d040"/><circle cx="20" cy="34" r="12" fill="#fff"/><circle cx="33" cy="38" r="10" fill="#fff"/></svg>
  <svg class="d" viewBox="0 0 60 60"><rect x="16" y="8" width="40" height="52" fill="#cfe0ee" stroke="#778"/><path d="M16 20h40M29 8v52M43 8v52" stroke="#778"/><circle cx="22" cy="44" r="20" fill="#ea7a88"/><path d="M14 32l6 18M32 26l-4 18" stroke="#333" stroke-width="2"/></svg>
  <svg class="d dnudge" viewBox="0 0 52 60"><path d="M4 34l18 20 18-20z" fill="#eee"/><path d="M12 6h12v16h8L18 40 4 22h8z" fill="#48b048"/><circle cx="34" cy="15" r="11" fill="#e02a38"/><text x="34" y="20" class="badge">2</text></svg>
  <i class="dsep s2"></i>
  <svg class="d" viewBox="0 0 64 60"><rect x="2" y="5" width="60" height="55" fill="#ddd" stroke="#777"/><rect x="8" y="22" width="50" height="38" fill="#bbb"/><rect x="51" y="6" width="10" height="14" fill="#b8202a"/></svg>
  <svg class="d dlast" viewBox="0 0 52 60"><rect y="16" width="40" height="44" rx="8" fill="#d6d7da"/></svg>
</div>
</body>
</html>
```
FILE: styles.css
```css
*{box-sizing:border-box}
html,body{margin:0;padding:0}
body{width:1728px;height:1080px;overflow:hidden;background:#e8ebf6;font-family:"Noto Sans","Noto Sans CJK SC",sans-serif;color:#333;display:flex;flex-direction:column}
.defs{position:absolute}
.topstrip{height:3px;background:#fff;flex:none}
.menubar{height:28px;flex:none;display:flex;align-items:center;gap:10.700px;background:#e9ecf8;color:#3c3c3c;white-space:nowrap;overflow:hidden}
.mi{flex:none;font:15.500px "Noto Sans CJK SC",sans-serif;letter-spacing:-.2px;position:relative;top:-1px}
.mi u{text-decoration-thickness:1px}
.mi.first{margin-left:-12px}

.tbrow{display:flex;flex:none;height:27px;background:#e8ebf6;gap:6px;overflow:hidden}
.row1{padding-bottom:1px}
.row2{height:28px;border-bottom:1px solid #8d8d8d}
.seg{display:flex;align-items:center;flex:none;height:100%;position:relative;background:linear-gradient(#eceef6,#e6e8f1 55%,#b9bcca);border-radius:0 5px 5px 0;gap:0;padding-right:10px;box-shadow:inset -3px 0 0 #d2d5e3}
.pl{padding-left:5px}
.pl2{padding-left:12px}
.w455{width:457px}.w174{width:175px}.w166{width:166px}.w102{width:102px}
.w42{width:42px}.w55{width:58px}.w466{width:455px;padding-left:3px;gap:0}.w436{width:436px}.w96{width:96px}
.w168{width:168px}.w135{width:135px}.w254{width:254px}.w112{width:112px}
.ic{width:14px;height:14px;flex:none;margin:0 .3px;opacity:.9}
.s{width:1px;height:20px;background:#d4d6e0;margin:0 2px;flex:none}
.grip{position:absolute;right:1px;bottom:1px;width:6px;height:7px;background:linear-gradient(#eee,#888);border-bottom:1px solid #444}
.hi{display:inline-flex;align-items:center;justify-content:center;height:26px;width:15px;background:#cfe2f4;border:1px solid #8ab4dc;flex:none}
.combo{flex:none;height:24px;background:#fff;display:flex;align-items:center;padding-left:4px;font-size:16px;color:#444;white-space:nowrap;margin:0 1px}
.big{font-size:17px;font-family:"Open Sans",sans-serif;color:#444;padding-left:1px}
.dim{background:#efefef;border:1px solid #d8d9de;color:#777;font-size:18px}
.c78{width:78px;margin-left:0}.c80{width:80px}.c72{width:72px}.c76{width:76px;padding-left:2px}
.c170{width:170px;margin-left:0;font-family:"Noto Sans CJK SC",sans-serif;font-size:17px;padding-left:6px;color:#888}
.tt{font:700 19px "Liberation Serif",serif;color:#222;margin-right:4px;position:relative;letter-spacing:-9px;padding-right:9px}
.tt em{font-style:normal;position:relative;top:3px}
.drop{flex:none;width:9px;height:24px;background:linear-gradient(90deg,#eee,#b5b7c4);position:relative}
.drop.thin{width:6px}
.drop::after,.dot::after{content:"";display:block;width:2px;height:2px;background:#444;margin:auto;position:absolute;left:0;right:0;top:0;bottom:0}
.dot{width:5px;height:14px;position:relative;flex:none}
.lt{width:15px;text-align:center;font-size:14px;color:#556;flex:none;font-family:"Liberation Sans",sans-serif}
.tiny{font-size:7px;width:18px}
.fx{flex:none;width:14px;text-align:center;font:10px "Liberation Serif",serif;color:#555}
.fx.b{font-weight:700}.fx.it{font-style:italic;font-weight:700}.fx.un{text-decoration:underline}
.fx.lg{font:14px "Liberation Sans",sans-serif}
.solid{font-family:"Noto Sans CJK SC",sans-serif;font-size:20px;color:#444;padding-left:2px;margin-left:9px}
.thick{display:block;width:24px;height:3px;background:#222;margin-right:1px}
.num{font-family:"Open Sans",sans-serif;font-size:16px}
.linebox{width:24px;height:13px;background:#e8ecf4;border:1px solid #aab;margin-left:0;flex:none}
.ten{width:80px;margin-left:1px;height:24px;font-family:"Open Sans",sans-serif;font-size:16px}

.main{flex:none;height:936px;display:flex;background:#e9ecf8}
.leftcol{width:1439px;flex:none;display:flex;flex-direction:column}
.workspace{flex:none;height:907px;background:#a0a0a0;position:relative;overflow:hidden}
.bottomtb{height:29px;padding-bottom:1px;gap:2px;background:linear-gradient(#f4f4f8,#eef0f8)}
.bottomtb .dot{width:6.500px}

.gwin{position:absolute;left:224px;top:58px;width:898px;height:722px;display:flex;flex-direction:column;padding:0 8px 9px;background:linear-gradient(#8ea8c8,#a6bfdb 8%,#d4e2f0 13%,#aac5e0 20%,#b0c8e0);border:1px solid #8a8a8a;border-bottom:1px solid #2e5a72;border-radius:3px 3px 0 0}
.gtitle{height:38px;flex:none;display:flex;align-items:center;padding:5px 0 0 2px}
.gicon{width:20px;height:20px;flex:none}
.gname{flex:1;margin-left:3px;font:16.500px "Noto Sans",sans-serif;color:#2c3646}
.wbtn{width:44px;height:27px;margin-left:2px;border:1px solid #7f93ad;border-radius:2px;background:linear-gradient(#c8d4e4,#9fb2ca 50%,#93a8c2);display:flex;align-items:center;justify-content:center;flex:none;position:relative;top:-1px}
.wclose{width:45px;background:linear-gradient(#e49a8c,#c8402e 50%,#b8301e);border-color:#8a3a30}
.wmin{width:12px;height:4px;background:#e8eef5;border:1px solid #5a6a80;margin-top:5px}
.wres{width:12px;height:9px;border:2px solid #e8eef5;outline:1px solid #5a6a80;outline-offset:-4px}
.client{flex:1;background:#fff;position:relative;overflow:hidden;border-bottom:2px solid #c8c8c8}
.chart{display:block}
.chart text{font-family:"Liberation Serif","Noto Sans CJK SC",serif;fill:#555}
.bars rect{fill:#f3bb8a;stroke:#333;stroke-width:1.500}
.fit{fill:none;stroke:#d9788c;stroke-width:1}
.axis{fill:none;stroke:#111;stroke-width:2}
.ylab text{font-size:20.500px;text-anchor:end}
.xlab text{font-size:20.500px;text-anchor:middle}
.chart .ttl{font-size:24px}
.lgbox{fill:#fff;stroke:#888;stroke-width:1}
.lgswatch{fill:#f3bb8a;stroke:#333;stroke-width:1.200}
.lgline{stroke:#e58a9c;stroke-width:1}
.layertab{position:absolute;left:0;top:0;width:27px;height:26px;background:#b2b2b2;font:700 21px "Liberation Sans",sans-serif;color:#1a1a1a;display:flex;align-items:center;justify-content:center}
.lock{position:absolute;left:6px;top:32px}
.fit-table{position:absolute;left:269px;top:182px;width:316px;height:185px;border-collapse:collapse;table-layout:fixed;background:#fff;border:2px solid #85889a;font:16.300px "Liberation Serif","Noto Sans CJK SC",serif;color:#5b6068}
.fit-table th,.fit-table td{border:1px solid #c4c8d2;padding:0;height:20.500px;line-height:19px;font-weight:400;white-space:nowrap;overflow:hidden}
.fit-table th{width:100px;text-align:left;padding-left:3px;font-size:15.500px;font-family:"Noto Sans CJK SC",sans-serif}
.fit-table th.lat{font-family:"Liberation Serif","Noto Sans CJK SC",serif;font-size:16.300px;letter-spacing:.7px}
.fit-table td{text-align:center;letter-spacing:.5px}
.fit-table .spaced{letter-spacing:1.300px;font-size:16px}
.fit-table .val{word-spacing:6px;letter-spacing:.7px}
.handles{position:absolute;left:0;top:0;pointer-events:none}

.tip{position:absolute;left:0;top:811px;width:324px;height:96px;background:#d0d888}
.tip p{margin:0;position:absolute;white-space:nowrap;font-family:"Noto Sans CJK SC",sans-serif;color:#8a8a52;font-size:14px;line-height:18px}
.tip .l1{left:0;top:28px;letter-spacing:-.05px}
.tip .l2{left:2px;top:47px}
.tip .l3{left:0;top:69px;font-size:16px;line-height:20px;color:#6a6a40}
.tipbtns{position:absolute;right:2px;top:2px;display:flex;gap:4px}
.tb{width:14px;height:16px;background:#e2e4d0;border:1px solid #c8c8b0;border-radius:2px;font:10px/14px "Liberation Sans",sans-serif;text-align:center;color:#666}
.ghost{position:absolute;left:0;top:890px;width:162px;height:17px;border:1px solid #c4cc84;border-bottom:0;border-radius:0 5px 0 0;display:flex;gap:26px;padding:8px 0 0 40px;overflow:hidden}
.gb{width:14px;height:14px;border:1px solid #e8e8d0;flex:none}
.ghost svg{flex:none}
.preview{position:absolute;left:164px;top:873px;width:208px;height:34px;border:1px solid #69727e;border-bottom:0;border-radius:5px 5px 0 0;background:linear-gradient(90deg,rgba(212,220,140,.9) 77%,#a8a8a8 77%);display:flex;align-items:center;padding:2px 2px 4px}
.pic{width:20px;height:22px;flex:none;margin-left:3px}
.pname{width:44px;font:16px "Noto Sans",sans-serif;color:#b0b48a;margin-left:3px;flex:none}
.pbtn{width:45px;height:28px;margin-right:2px;border:1px solid rgba(190,196,130,.7);border-radius:2px;background:rgba(255,255,200,.08);display:flex;align-items:center;justify-content:center;flex:none}
.pres{width:12px;height:12px;border:1px solid #b8bc80;background:#e4e6b0}
.pmax{width:14px;height:10px;border:2px solid #b8bc80}
.pclose{background:#c2d0e0;border-color:#a8b8cc}

.track{width:24px;flex:none;height:907px;background:#ececf0;padding:21px 6px 43px 6px}
.thumb{height:100%;background:#797979}
.vbar{width:20px;flex:none;height:713px;padding:10px 1px 0 0;display:flex;flex-direction:column;align-items:center;gap:5.450px;background:linear-gradient(90deg,#eff0f6,#b9bccd);position:relative}
.vbar .hi{height:20px;width:17px;margin:-3px 0}
.vgrip{position:absolute;top:3px;left:4px;width:11px;height:1px;border-top:1px dotted #555}
.hs{width:17px;height:1px;background:#c8cad6;flex:none}
.hs.wide{margin:5px 0}
.panel{flex:1;min-width:0;margin-left:1px;display:flex;flex-direction:column;background:#dfe3ee;overflow:hidden}
.ptitle{margin:0;height:26px;flex:none;font:400 16px/23px "Noto Sans CJK SC",sans-serif;color:#444;padding-left:3px;background:linear-gradient(#bcc8d6,#e4e9f1);letter-spacing:.2px}
.ptitle.apps{height:27px;line-height:27px;margin-top:3px;font-family:"Noto Sans",sans-serif;font-size:15.500px}
.tree{height:333px;flex:none;background:#fdfdfe;padding-top:1px;border:1px solid #888;border-right:0;border-bottom:1px solid #bbb}
.trow{height:26.600px;display:flex;align-items:center;font:16.500px "Noto Sans","Noto Sans CJK SC",sans-serif;color:#333;white-space:nowrap;position:relative}
.trow.sel{background:#0a5cb4;color:#a5e6ff;padding-left:3px;height:25px;margin:1px 0}
.in1{padding-left:22px}
.in2{padding-left:60px}
.con::before{content:"";position:absolute;left:9px;top:-13px;width:12px;height:27px;border-left:1px dotted #bbb;border-bottom:1px dotted #bbb}
.in2.con::before{left:29px;width:14px}
.exp{width:15px;height:15px;border:1px solid #c0c4d0;background:linear-gradient(#f4f5f9,#d8dbe6);color:#1c3a78;font:700 14px/12px "Liberation Sans",sans-serif;text-align:center;flex:none;position:relative}
.tfold{margin:0 2px 0 4px;flex:none}
.chk{width:20px;height:20px;border-radius:3px;background:#0f56a8;color:#fff;font:13px/20px "DejaVu Sans",sans-serif;text-align:center;flex:none;margin-left:4px;position:relative}
.in2 .chk{margin-left:0}
.tsw{width:43px;height:15px;background:#f3bb8a;border:1px solid #333;margin:0 5px;flex:none}
.tline{width:50px;height:2px;background:#e07a8c;margin-right:3px;flex:none}
.bold{font-weight:700;color:#111;font-size:15.500px}
.trow .chk + span{margin-left:1px}
.appbody{flex:1;min-height:0;display:flex;background:#fff;border-bottom:1px solid #555}
.tabs{flex:none;display:block}
.vtab{font:15.500px "Noto Sans CJK SC",sans-serif;writing-mode:vertical-rl;fill:#333}
.vb{font-weight:700;fill:#111}
.appgrid{flex:1;min-width:0;display:grid;grid-template-columns:repeat(3,100px);grid-auto-rows:100px;padding-left:1px;overflow:hidden;background:#fff;border-left:1px solid #9a9a9a}
.app{display:flex;flex-direction:column;align-items:center;padding-top:2px;text-align:center;font:16px/20.500px "Noto Sans","Noto Sans CJK SC",sans-serif;color:#3c3c3c;white-space:nowrap;min-width:0}
.app svg{flex:none;margin-bottom:3px}
.app.faded{color:#8a8a8a}
.third{padding-top:49px}

.status{flex:none;height:26px;padding-left:1097px;background:#eceef4;border-top:1px solid #c6c8d2;border-bottom:1px solid #555;color:#333;white-space:nowrap;overflow:hidden}
.scells{display:flex;align-items:center;height:100%;width:800px;transform:scaleX(.89);transform-origin:0 50%;font:15.500px "Liberation Sans","Noto Sans CJK SC",sans-serif}
.cell{flex:none;padding:0 2px;height:100%;display:flex;align-items:center;border-right:1px solid #d8dae2}
.cell.dimc{color:#999}
.cell.red i{display:block;width:5px;height:5px;background:#a01020;margin:0 3px 4px 3px}
.cell.au{padding-right:6px}
.cell.lg{padding-right:8px}

.dock{flex:none;height:33px;background:#c5c6cb;display:flex;gap:17.400px;overflow:hidden;align-items:flex-start}
.d{width:52px;height:60px;flex:none;position:relative;top:6px}
.dfirst{margin-left:-27px}
.dsep{width:1px;height:33px;background:#9a9ba0;flex:none;margin:0 5px 0 7px}
.dsep.s2{margin:0 4px 0 0}
.dnudge{margin-left:8px}
.dlast{margin-left:7px}
.badge{font:700 14px "Liberation Sans",sans-serif;fill:#fff;text-anchor:middle}
.pb{font:700 26px "Liberation Sans",sans-serif;fill:#fff;text-anchor:middle}
```
